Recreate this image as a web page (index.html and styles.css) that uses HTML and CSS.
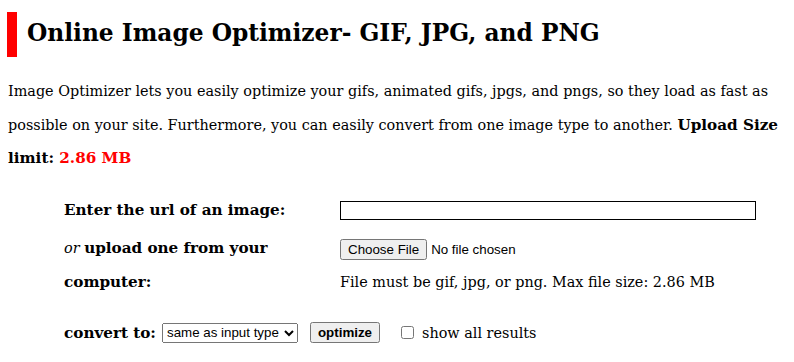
FILE: index.html
```html
<!DOCTYPE html>
<html>
<head>
<meta charset="utf-8">
<link rel="stylesheet" href="styles.css">
</head>
<body>
<div class="page">
  <h1 class="title">Online Image Optimizer- GIF, JPG, and PNG</h1>
  <p class="intro">Image Optimizer lets you easily optimize your gifs, animated gifs, jpgs, and pngs, so they load as fast as possible on your site. Furthermore, you can easily convert from one image type to another. <b class="strong">Upload Size limit: <span class="red">2.86 MB</span></b></p>
  <form class="form">
    <div class="grid">
      <div class="label"><b class="strong">Enter the url of an image:</b></div>
      <div class="field"><input class="url" type="text"></div>
      <div class="label"><i>or</i> <b class="strong">upload one from your computer:</b></div>
      <div class="field">
        <div class="fileline"><input class="file" type="file"></div>
        <div class="note">File must be gif, jpg, or png. Max file size: 2.86 MB</div>
      </div>
    </div>
    <div class="convert">
      <b class="strong">convert to:</b>
      <select class="sel"><option>same as input type</option></select>
      <button class="btn" type="button">optimize</button>
      <label class="chk"><input type="checkbox"> show all results</label>
    </div>
  </form>
</div>
</body>
</html>
```
FILE: styles.css
```css
html, body { margin: 0; padding: 0; background: #fff; }
body { font-family: Georgia, "DejaVu Serif", serif; color: #000; font-size: 14.4px; }
.page { padding: 0 7px; }
.title {
  margin: 12px 0 0 0;
  border-left: 10px solid #f00;
  padding: 4px 0 8px 10px;
  font-size: 23.3px;
  line-height: 33px;
  font-weight: bold;
}
.intro { margin: 18px 0 0 1px; line-height: 33.5px; }
.strong { font-size: 15.2px; }
.red { color: #f00; }
.form { margin: 17px 0 0 57px; }
.grid { display: grid; grid-template-columns: 276px 1fr; row-gap: 4px; line-height: 34px; }
.label { width: 240px; }
.field { display: flex; flex-direction: column; }
.url { width: 416px; height: 19px; box-sizing: border-box; border: 1px solid #000; margin-top: 8px; padding: 0; }
.fileline { height: 34px; display: flex; align-items: center; padding-top: 3px; box-sizing: border-box; }
.file { font-family: Arial, "Liberation Sans", sans-serif; font-size: 13.33px; }
.convert { margin-top: 17px; display: flex; align-items: center; height: 34px; }
.sel { margin-left: 6px; font-family: Arial, "Liberation Sans", sans-serif; font-size: 13.33px; width: 136px; height: 20px; }
.btn { margin-left: 12px; font-family: Arial, "Liberation Sans", sans-serif; font-size: 13.33px; font-weight: bold; }
.chk { margin-left: 18px; display: flex; align-items: center; }
.chk input { margin: 0 8px 0 3px; }
```
